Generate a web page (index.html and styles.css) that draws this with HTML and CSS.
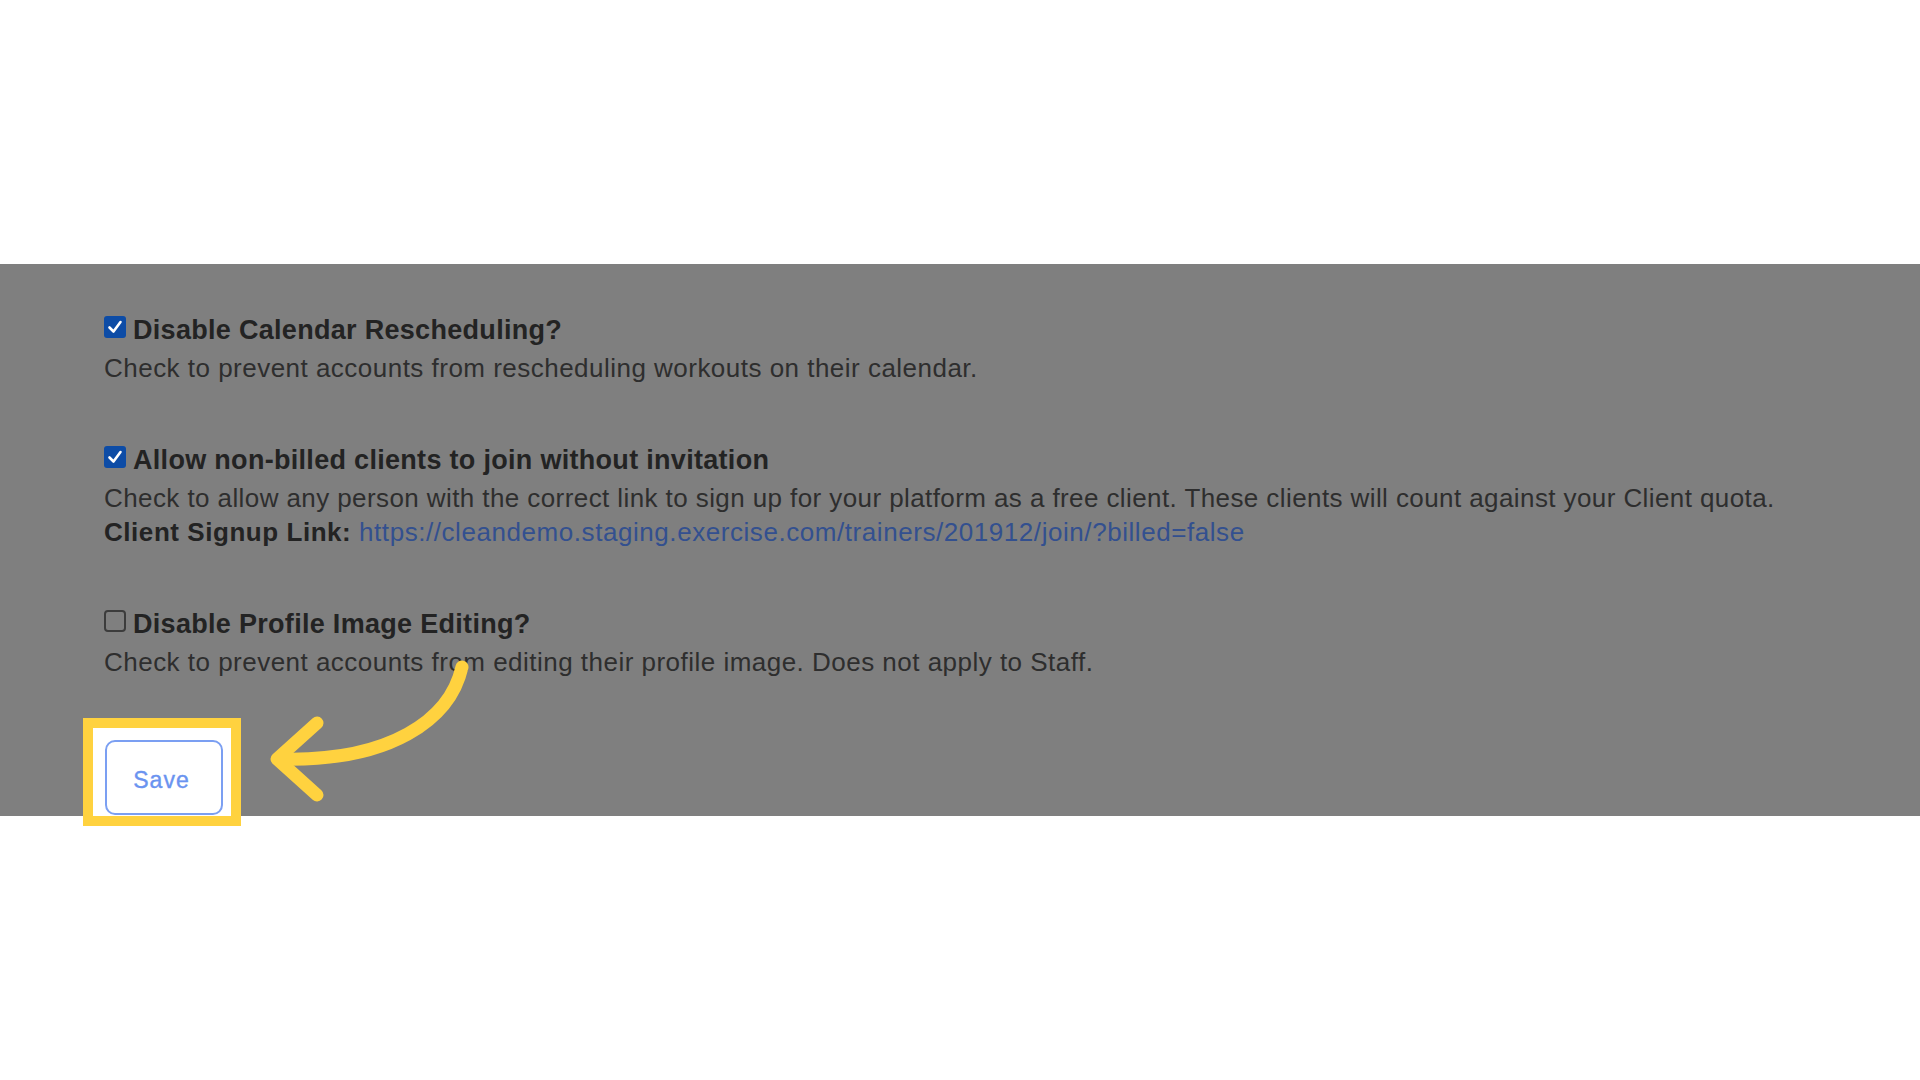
FILE: index.html
```html
<!DOCTYPE html>
<html lang="en">
<head>
<meta charset="utf-8">
<title>Account Settings</title>
<link rel="stylesheet" href="styles.css">
</head>
<body>
<div class="top-space"></div>
<main class="band">
  <section class="setting">
    <div class="setting-title">
      <span class="cb checked"><svg viewBox="0 0 22 22" width="22" height="22"><path d="M5.5 11.5 L9.5 15.5 L16.5 6" fill="none" stroke="#fff" stroke-width="2.6" stroke-linecap="round" stroke-linejoin="round"/></svg></span>
      <span class="title-text">Disable Calendar Rescheduling?</span>
    </div>
    <div class="desc">Check to prevent accounts from rescheduling workouts on their calendar.</div>
  </section>

  <section class="setting">
    <div class="setting-title">
      <span class="cb checked"><svg viewBox="0 0 22 22" width="22" height="22"><path d="M5.5 11.5 L9.5 15.5 L16.5 6" fill="none" stroke="#fff" stroke-width="2.6" stroke-linecap="round" stroke-linejoin="round"/></svg></span>
      <span class="title-text">Allow non-billed clients to join without invitation</span>
    </div>
    <div class="desc desc-long">Check to allow any person with the correct link to sign up for your platform as a free client. These clients will count against your Client quota.</div>
    <div class="desc"><strong class="link-label">Client Signup Link:</strong> <a class="link" href="#">https://cleandemo.staging.exercise.com/trainers/201912/join/?billed=false</a></div>
  </section>

  <section class="setting">
    <div class="setting-title">
      <span class="cb"></span>
      <span class="title-text">Disable Profile Image Editing?</span>
    </div>
    <div class="desc">Check to prevent accounts from editing their profile image. Does not apply to Staff.</div>
  </section>

  <div class="save-row">
    <div class="spot">
      <button class="save-btn" type="button">Save</button>
    </div>
  </div>

  <svg class="arrow" viewBox="260 650 220 170" width="220" height="170">
    <path d="M462 667 C450 720 390 762 280 759" fill="none" stroke="#ffd23f" stroke-width="13" stroke-linecap="round"/>
    <path d="M317 723 L277 759 L317 795" fill="none" stroke="#ffd23f" stroke-width="13" stroke-linecap="round" stroke-linejoin="round"/>
  </svg>
</main>
</body>
</html>
```

FILE: styles.css
```css
html, body {
  margin: 0;
  padding: 0;
  background: #ffffff;
}

body {
  width: 1920px;
  height: 1080px;
  overflow: hidden;
  font-family: "Liberation Sans", Arial, Helvetica, sans-serif;
}

.top-space {
  height: 264px;
}

.band {
  position: relative;
  background: #7f7f7f;
  padding: 50px 0 0 104px;
}

.setting {
  margin-bottom: 59px;
}

.setting:last-of-type {
  margin-bottom: 49px;
}

.setting-title {
  display: flex;
  align-items: flex-start;
  gap: 7px;
}

.title-text {
  font-size: 27px;
  line-height: 32px;
  font-weight: bold;
  letter-spacing: 0.3px;
  color: #232323;
}

.cb {
  flex: none;
  box-sizing: border-box;
  width: 22px;
  height: 22px;
  margin-top: 2px;
  border-radius: 4px;
  border: 2px solid #3c3c3c;
}

.cb.checked {
  border: none;
  border-radius: 3px;
  background: #0d4ca6;
}

.cb svg {
  display: block;
}

.desc {
  font-size: 26px;
  line-height: 34px;
  letter-spacing: 0.48px;
  color: #2e2e2e;
  white-space: nowrap;
}

.desc-long {
  letter-spacing: 0.41px;
}

.setting-title + .desc {
  margin-top: 5px;
}

.link-label {
  font-weight: bold;
  letter-spacing: 0.55px;
  color: #232323;
}

.link {
  color: #33508f;
  letter-spacing: 0.56px;
  text-decoration: none;
}

.save-row {
  display: flex;
}

.spot {
  margin-left: -11px;
  padding: 12px 8px 1px 12px;
  background: #ffffff;
  outline: 10px solid #ffd23f;
}

.save-btn {
  display: flex;
  align-items: center;
  justify-content: center;
  box-sizing: border-box;
  width: 118px;
  height: 75px;
  padding: 6px 5px 0 0;
  border: 2px solid #7b9ff2;
  border-radius: 10px;
  background: #ffffff;
  color: #6a93f0;
  font-family: "Liberation Sans", Arial, Helvetica, sans-serif;
  font-size: 23px;
  font-weight: normal;
  letter-spacing: 1px;
  -webkit-text-stroke: 0.4px #6a93f0;
}

.arrow {
  position: absolute;
  left: 260px;
  top: 386px;
}
```
